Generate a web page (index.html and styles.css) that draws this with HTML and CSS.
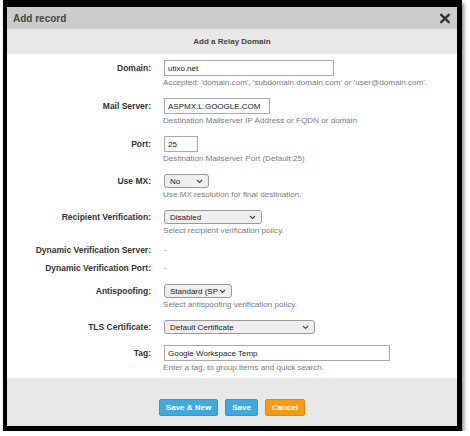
FILE: index.html
```html
<!DOCTYPE html>
<html>
<head>
<meta charset="utf-8">
<link rel="stylesheet" href="styles.css">
</head>
<body>
<div class="frame">
  <div class="dialog">
    <div class="titlebar">
      <span class="title">Add record</span>
      <svg class="close" width="12" height="11" viewBox="0 0 12 11"><path d="M2.2 1.8 L9.8 9.2 M9.8 1.8 L2.2 9.2" stroke="#333" stroke-width="2.4" stroke-linecap="round"/></svg>
    </div>
    <div class="subtitle">Add a Relay Domain</div>
    <div class="form">
      <div class="row">
        <div class="lbl">Domain:</div>
        <div class="field">
          <input class="input w-domain" type="text" value="utixo.net">
          <div class="help">Accepted: 'domain.com', 'subdomain.domain.com' or 'user@domain.com'.</div>
        </div>
      </div>
      <div class="row">
        <div class="lbl">Mail Server:</div>
        <div class="field">
          <input class="input w-mail" type="text" value="ASPMX.L.GOOGLE.COM">
          <div class="help">Destination Mailserver IP Address or FQDN or domain</div>
        </div>
      </div>
      <div class="row">
        <div class="lbl">Port:</div>
        <div class="field">
          <input class="input w-port" type="text" value="25">
          <div class="help">Destination Mailserver Port (Default:25)</div>
        </div>
      </div>
      <div class="row">
        <div class="lbl sel">Use MX:</div>
        <div class="field">
          <div class="select w-mx"><span>No</span><svg width="7" height="5" viewBox="0 0 7 5"><path d="M1 1 L3.5 3.5 L6 1" fill="none" stroke="#444" stroke-width="1.1"/></svg></div>
          <div class="help">Use MX resolution for final destination.</div>
        </div>
      </div>
      <div class="row tight">
        <div class="lbl sel">Recipient Verification:</div>
        <div class="field">
          <div class="select w-recip"><span>Disabled</span><svg width="7" height="5" viewBox="0 0 7 5"><path d="M1 1 L3.5 3.5 L6 1" fill="none" stroke="#444" stroke-width="1.1"/></svg></div>
          <div class="help">Select recipient verification policy.</div>
        </div>
      </div>
      <div class="row static">
        <div class="lbl">Dynamic Verification Server:</div>
        <div class="field dash">-</div>
      </div>
      <div class="row static last">
        <div class="lbl">Dynamic Verification Port:</div>
        <div class="field dash">-</div>
      </div>
      <div class="row">
        <div class="lbl sel">Antispoofing:</div>
        <div class="field">
          <div class="select w-anti"><span>Standard (SP</span><svg width="7" height="5" viewBox="0 0 7 5"><path d="M1 1 L3.5 3.5 L6 1" fill="none" stroke="#444" stroke-width="1.1"/></svg></div>
          <div class="help">Select antispoofing verification policy.</div>
        </div>
      </div>
      <div class="row nohelp">
        <div class="lbl sel">TLS Certificate:</div>
        <div class="field">
          <div class="select w-tls"><span>Default Certificate</span><svg width="7" height="5" viewBox="0 0 7 5"><path d="M1 1 L3.5 3.5 L6 1" fill="none" stroke="#444" stroke-width="1.1"/></svg></div>
        </div>
      </div>
      <div class="row final">
        <div class="lbl">Tag:</div>
        <div class="field">
          <input class="input w-tag" type="text" value="Google Workspace Temp">
          <div class="help">Enter a tag, to group items and quick search.</div>
        </div>
      </div>
    </div>
    <div class="footer">
      <button class="btn blue">Save &amp; New</button>
      <button class="btn blue">Save</button>
      <button class="btn orange">Cancel</button>
    </div>
  </div>
</div>
</body>
</html>
```
FILE: styles.css
```css
html, body {
  margin: 0;
  padding: 0;
  background: #ffffff;
}
body {
  font-family: "Liberation Sans", Arial, sans-serif;
  font-size: 8px;
  color: #333;
}
.frame {
  margin-left: 3px;
  width: 450px;
  border-style: solid;
  border-color: #000;
  border-width: 7px 5px 5px 4px;
  box-shadow: 2px 3px 4px rgba(0, 0, 0, 0.45);
}
.dialog {
  background: #fff;
}
.titlebar {
  height: 22px;
  background: #cccccc;
  display: flex;
  align-items: center;
  justify-content: space-between;
  padding: 0 6px 0 6px;
}
.title {
  font-size: 10px;
  font-weight: bold;
  color: #444;
  padding-top: 1px;
}
.close {
  display: block;
  margin-top: 1px;
}
.subtitle {
  height: 25px;
  line-height: 25px;
  background: #e8e8e8;
  text-align: center;
  font-weight: bold;
  color: #444;
}
.form {
  padding: 6px 0 4px 0;
}
.row {
  display: grid;
  grid-template-columns: 144px 1fr;
  column-gap: 12px;
  margin-bottom: 9px;
}
.row.tight { margin-bottom: 4px; }
.row.static { margin-bottom: 0; }
.row.static.last { margin-bottom: 7px; }
.row.nohelp { margin-bottom: 11px; }
.row.final { margin-bottom: 0; }
.lbl {
  text-align: right;
  font-weight: bold;
  font-size: 8.5px;
  color: #333;
  line-height: 16px;
  white-space: nowrap;
}
.lbl.sel { line-height: 14px; }
.row.static .lbl, .dash {
  line-height: 18px;
}
.dash {
  color: #777;
  padding-left: 1px;
}
.field {
  display: flex;
  flex-direction: column;
  align-items: flex-start;
}
.input {
  box-sizing: border-box;
  height: 16px;
  margin: 0 0 0 1px;
  padding: 0 3px;
  border: 1px solid #a9a9a9;
  border-radius: 0;
  background: #fff;
  font-family: "Liberation Sans", Arial, sans-serif;
  font-size: 8px;
  color: #222;
  outline: none;
}
.select {
  box-sizing: border-box;
  height: 14px;
  margin-left: 1px;
  padding: 0 5px 0 5px;
  border: 1px solid #9a9a9a;
  border-radius: 3px;
  background: #efefef;
  display: flex;
  align-items: center;
  justify-content: space-between;
  color: #222;
}
.select svg { display: block; flex: none; }
.help {
  margin-top: 1px;
  line-height: 12px;
  font-size: 8.1px;
  color: #7a7a7a;
  white-space: nowrap;
}
.w-domain { width: 170px; }
.w-mail { width: 106px; }
.w-port { width: 34px; }
.w-mx { width: 45px; }
.w-recip { width: 98px; }
.w-anti { width: 68px; }
.w-tls { width: 151px; }
.w-tag { width: 226px; }
.footer {
  height: 48px;
  background: #e8e8e8;
  display: flex;
  justify-content: center;
  align-items: flex-start;
  gap: 7px;
  padding-top: 21px;
  box-sizing: border-box;
}
.btn {
  height: 17px;
  padding: 0 6px;
  border-radius: 2px;
  font-family: "Liberation Sans", Arial, sans-serif;
  font-size: 8px;
  font-weight: bold;
  color: #fff;
  cursor: pointer;
}
.btn.blue {
  background: #3fa9dd;
  border: 1px solid #3598c9;
}
.btn.orange {
  background: #f39c12;
  border: 1px solid #dd8c0e;
}
```
